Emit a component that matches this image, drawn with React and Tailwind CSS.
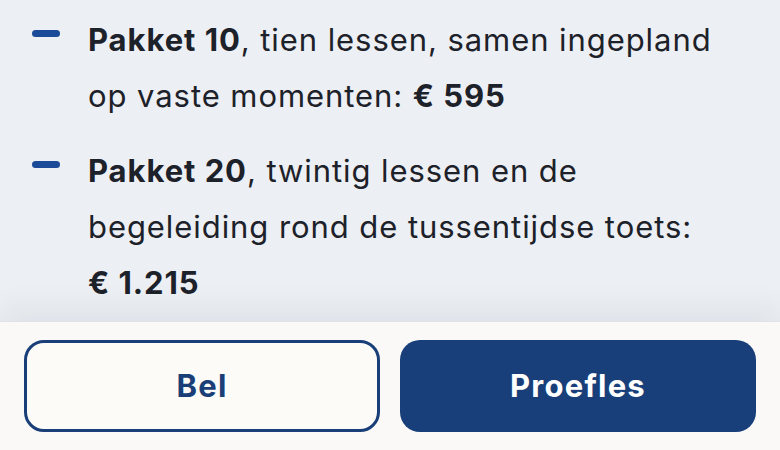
import React from 'react';

const packages = [
  {
    name: 'Pakket 10',
    text: ', tien lessen, samen ingepland op vaste momenten: ',
    price: '€ 595',
  },
  {
    name: 'Pakket 20',
    text: ', twintig lessen en de begeleiding rond de tussentijdse toets: ',
    price: '€ 1.215',
  },
];

const App = () => {
  return (
    <div
      className="w-[780px] h-[450px] flex flex-col bg-[#eceff3] overflow-hidden"
      style={{ fontFamily: 'Inter, "Noto Sans", sans-serif' }}
    >
      {/* Package list */}
      <ul className="flex-1 flex flex-col gap-[19px] pl-8 pr-8 pt-3">
        {packages.map((p) => (
          <li key={p.name} className="flex items-start gap-7">
            <span className="shrink-0 mt-[18px] w-7 h-[7px] rounded-full bg-[#1b4a98]" />
            <p className="text-[31px] leading-[56px] tracking-[0.03em] text-[#1d2129]">
              <strong className="font-bold">{p.name}</strong>
              {p.text}
              <strong className="font-bold whitespace-nowrap">{p.price}</strong>
            </p>
          </li>
        ))}
      </ul>

      {/* Sticky action bar */}
      <div className="h-[129px] shrink-0 border-t border-[#dfe3e8] bg-[#faf9f7] shadow-[0_-14px_28px_rgba(30,40,60,0.06)] grid grid-cols-2 gap-5 px-6 pt-[18px]">
        <button className="h-[92px] rounded-[20px] border-[3px] border-[#1a3f78] bg-[#fcfbf8] text-[#1a3f78] text-[31px] tracking-[0.04em] font-bold">
          Bel
        </button>
        <button className="h-[92px] rounded-[20px] bg-[#183f7a] text-white text-[31px] tracking-[0.04em] font-bold">
          Proefles
        </button>
      </div>
    </div>
  );
};

export default App;
